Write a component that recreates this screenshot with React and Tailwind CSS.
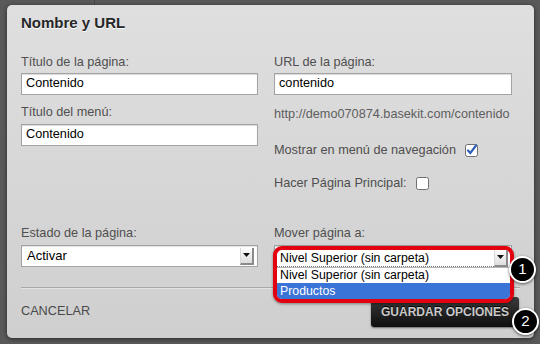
import React from 'react';

const font = { fontFamily: '"Liberation Sans", Arial, sans-serif' };

function Label({ children, className = '' }) {
  return <div className={`text-[12.7px] leading-[14px] text-[#4f4f4f] ${className}`}>{children}</div>;
}

function TextInput({ value }) {
  return (
    <div className="h-[22px] w-full bg-white border border-[#a3a3a3] shadow-[inset_0_1px_1px_rgba(0,0,0,0.15)] px-[4px] flex items-center text-[12.7px] text-black">
      {value}
    </div>
  );
}

function Arrow() {
  return (
    <div className="h-[17px] w-[14px] flex items-center justify-center bg-gradient-to-b from-[#fdfdfd] to-[#dedede] border-r-2 border-b-2 border-[#8a8a8a] border-l border-l-[#d8d8d8]">
      <svg width="7" height="4" viewBox="0 0 7 4">
        <path d="M0 0h7L3.5 4z" fill="#111" />
      </svg>
    </div>
  );
}

function SelectBox({ value }) {
  return (
    <div className="h-[22px] w-full bg-white border border-[#a3a3a3] shadow-[inset_0_1px_1px_rgba(0,0,0,0.12)] pl-[5px] pr-[3px] flex items-center justify-between text-[13px] text-black">
      <span>{value}</span>
      <Arrow />
    </div>
  );
}

function Checkbox({ checked }) {
  return (
    <svg width="13" height="13" viewBox="0 0 13 13" className="shrink-0">
      <rect x="0.5" y="0.5" width="12" height="12" rx="2" fill="#fff" stroke="#6f6f6f" />
      {checked && <path d="M3 6.5l2.3 2.6L11 1.5" fill="none" stroke="#2f5fb8" strokeWidth="2.2" strokeLinecap="round" />}
    </svg>
  );
}

function Badge({ n, className }) {
  return (
    <div
      className={`absolute w-[27px] h-[27px] rounded-full bg-black border-2 border-white shadow-[0_1px_3px_rgba(0,0,0,0.6)] flex items-center justify-center text-white text-[15px] ${className}`}
    >
      {n}
    </div>
  );
}

export default function App() {
  return (
    <div style={font} className="relative w-[540px] h-[344px] overflow-hidden bg-[#595959] pt-[5px] pl-[7px]">
      <div className="absolute left-[94px] top-0 w-px h-[5px] bg-[#474747]" />
      <div className="relative w-[527px] h-[333px] rounded-[5px] bg-gradient-to-b from-[#dfdfdf] to-[#cfcfcf] shadow-[0_1px_4px_rgba(0,0,0,0.55)] pt-[9px] px-[14px]">
        <h2 className="text-[15px] leading-[18px] font-bold text-[#262626] [text-shadow:0_1px_0_#fff]">Nombre y URL</h2>

        {/* upper fields */}
        <div className="mt-[23px] grid grid-cols-[237px_238px] gap-x-4">
          <div>
            <Label className="mb-[4px]">Título de la página:</Label>
            <TextInput value="Contenido" />
            <Label className="mt-[10px] mb-[5px]">Título del menú:</Label>
            <TextInput value="Contenido" />
          </div>
          <div>
            <Label className="mb-[4px]">URL de la página:</Label>
            <TextInput value="contenido" />
            <div className="mt-[12px] text-[12.7px] leading-[14px] text-[#5e5e5e]">http://demo070874.basekit.com/contenido</div>
            <div className="mt-[22px] flex items-center gap-[9px] text-[12.7px] leading-[14px] text-[#4f4f4f]">
              <span>Mostrar en menú de navegación</span>
              <Checkbox checked />
            </div>
            <div className="mt-[19px] flex items-center gap-[9px] text-[12.7px] leading-[14px] text-[#4f4f4f]">
              <span>Hacer Página Principal:</span>
              <Checkbox />
            </div>
          </div>
        </div>

        {/* lower fields */}
        <div className="mt-[36px] grid grid-cols-[237px_238px] gap-x-4">
          <div>
            <Label className="mb-[5px]">Estado de la página:</Label>
            <SelectBox value="Activar" />
          </div>
          <div>
            <Label className="mb-[5px]">Mover página a:</Label>
            <SelectBox value="" />
          </div>
        </div>

        <div className="mt-[20px] h-[2px] border-t border-[#a9a9a9] border-b border-b-[#e4e4e4]" />

        <div className="mt-[8px] flex items-center justify-between">
          <span className="text-[12.7px] text-[#4a4a4a]">CANCELAR</span>
          <button className="h-[30px] w-[148px] mr-[1px] rounded-[3px] bg-gradient-to-b from-[#3d3d3d] to-[#0e0e0e] shadow-[0_1px_2px_rgba(0,0,0,0.5)] text-[12px] font-bold text-[#c9c9c9] [text-shadow:0_-1px_0_#000]">
            GUARDAR OPCIONES
          </button>
        </div>

        {/* highlighted open dropdown */}
        <div className="absolute left-[266px] top-[241px] w-[241px] h-[57px] rounded-[9px] border-4 border-[#e3000f] bg-white overflow-hidden shadow-[0_1px_3px_rgba(0,0,0,0.4)]">
          <div className="h-[17px] flex items-center justify-between pl-[3px] pr-[2px] border-b border-dotted border-[#777] text-[12.3px] text-black">
            <span>Nivel Superior (sin carpeta)</span>
            <Arrow />
          </div>
          <div className="h-[16px] flex items-center pl-[3px] text-[12.3px] text-black border-t border-[#b5b5b5]">Nivel Superior (sin carpeta)</div>
          <div className="h-[16px] flex items-center pl-[3px] text-[12.3px] text-white bg-[#3b74d7]">Productos</div>
        </div>

        <Badge n="1" className="left-[502px] top-[251px]" />
        <Badge n="2" className="left-[505px] top-[303px]" />
      </div>
    </div>
  );
}
